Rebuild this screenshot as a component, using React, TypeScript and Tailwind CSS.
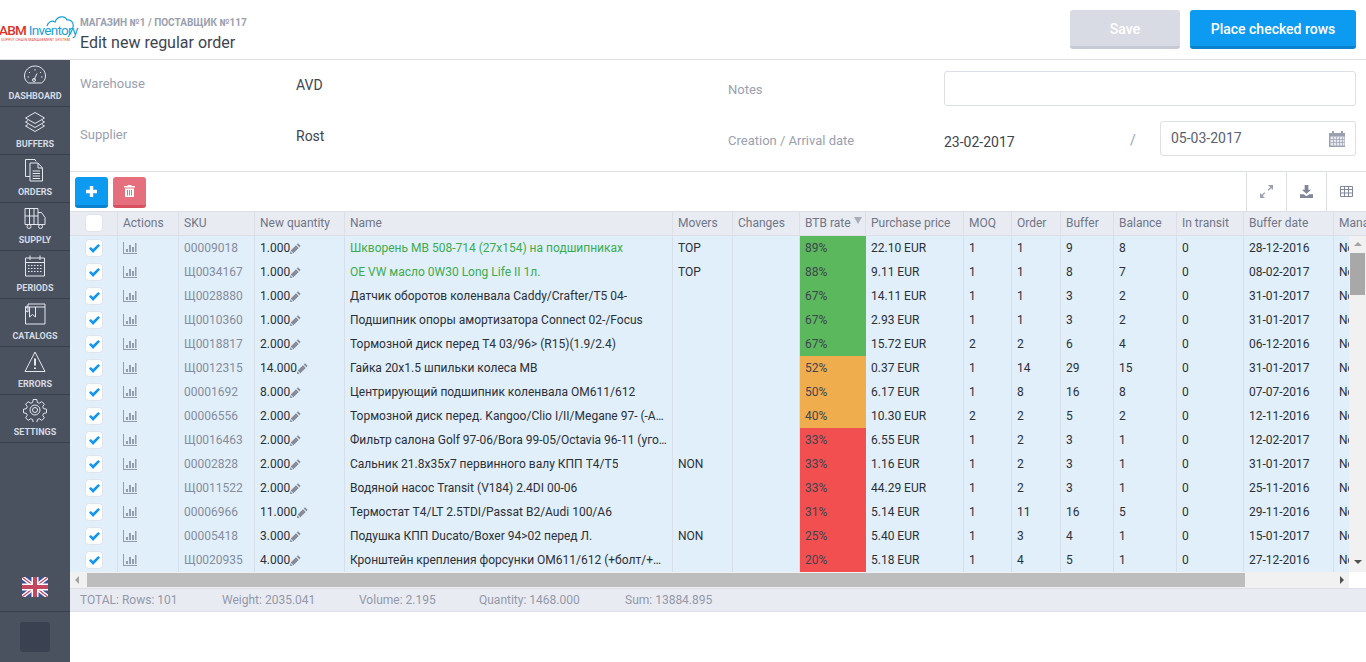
type Row = {
    sku: string;
    qty: string;
    name: string;
    movers?: string;
    btb: number;
    price: string;
    moq: number;
    order: number;
    buffer: number;
    balance: number;
    date: string;
    top?: boolean;
};

const rows: Row[] = [
    { sku: "00009018", qty: "1.000", name: "Шкворень MB 508-714 (27x154) на подшипниках", movers: "TOP", btb: 89, price: "22.10 EUR", moq: 1, order: 1, buffer: 9, balance: 8, date: "28-12-2016", top: true },
    { sku: "Щ0034167", qty: "1.000", name: "OE VW масло 0W30 Long Life II 1л.", movers: "TOP", btb: 88, price: "9.11 EUR", moq: 1, order: 1, buffer: 8, balance: 7, date: "08-02-2017", top: true },
    { sku: "Щ0028880", qty: "1.000", name: "Датчик оборотов коленвала Caddy/Crafter/T5 04-", btb: 67, price: "14.11 EUR", moq: 1, order: 1, buffer: 3, balance: 2, date: "31-01-2017" },
    { sku: "Щ0010360", qty: "1.000", name: "Подшипник опоры амортизатора Connect 02-/Focus", btb: 67, price: "2.93 EUR", moq: 1, order: 1, buffer: 3, balance: 2, date: "31-01-2017" },
    { sku: "Щ0018817", qty: "2.000", name: "Тормозной диск перед T4 03/96> (R15)(1.9/2.4)", btb: 67, price: "15.72 EUR", moq: 2, order: 2, buffer: 6, balance: 4, date: "06-12-2016" },
    { sku: "Щ0012315", qty: "14.000", name: "Гайка 20x1.5 шпильки колеса MB", btb: 52, price: "0.37 EUR", moq: 1, order: 14, buffer: 29, balance: 15, date: "31-01-2017" },
    { sku: "00001692", qty: "8.000", name: "Центрирующий подшипник коленвала OM611/612", btb: 50, price: "6.17 EUR", moq: 1, order: 8, buffer: 16, balance: 8, date: "07-07-2016" },
    { sku: "00006556", qty: "2.000", name: "Тормозной диск перед. Kangoo/Clio I/II/Megane 97- (-ABS) 238x12", btb: 40, price: "10.30 EUR", moq: 2, order: 2, buffer: 5, balance: 2, date: "12-11-2016" },
    { sku: "Щ0016463", qty: "2.000", name: "Фильтр салона Golf 97-06/Bora 99-05/Octavia 96-11 (угольный)", btb: 33, price: "6.55 EUR", moq: 1, order: 2, buffer: 3, balance: 1, date: "12-02-2017" },
    { sku: "00002828", qty: "2.000", name: "Сальник 21.8x35x7 первинного валу КПП T4/T5", movers: "NON", btb: 33, price: "1.16 EUR", moq: 1, order: 2, buffer: 3, balance: 1, date: "31-01-2017" },
    { sku: "Щ0011522", qty: "2.000", name: "Водяной насос Transit (V184) 2.4DI 00-06", btb: 33, price: "44.29 EUR", moq: 1, order: 2, buffer: 3, balance: 1, date: "25-11-2016" },
    { sku: "00006966", qty: "11.000", name: "Термостат T4/LT 2.5TDI/Passat B2/Audi 100/A6", btb: 31, price: "5.14 EUR", moq: 1, order: 11, buffer: 16, balance: 5, date: "29-11-2016" },
    { sku: "00005418", qty: "3.000", name: "Подушка КПП Ducato/Boxer 94>02 перед Л.", movers: "NON", btb: 25, price: "5.40 EUR", moq: 1, order: 3, buffer: 4, balance: 1, date: "15-01-2017" },
    { sku: "Щ0020935", qty: "4.000", name: "Кронштейн крепления форсунки OM611/612 (+болт/+шайба)", btb: 20, price: "5.18 EUR", moq: 1, order: 4, buffer: 5, balance: 1, date: "27-12-2016" },
];

const headers: { label: string; w: string }[] = [
    { label: "", w: "w-[48px]" },
    { label: "Actions", w: "w-[61px]" },
    { label: "SKU", w: "w-[76px]" },
    { label: "New quantity", w: "w-[90px]" },
    { label: "Name", w: "w-[328px]" },
    { label: "Movers", w: "w-[60px]" },
    { label: "Changes", w: "w-[67px]" },
    { label: "BTB rate", w: "w-[66px]" },
    { label: "Purchase price", w: "w-[98px]" },
    { label: "MOQ", w: "w-[48px]" },
    { label: "Order", w: "w-[49px]" },
    { label: "Buffer", w: "w-[53px]" },
    { label: "Balance", w: "w-[63px]" },
    { label: "In transit", w: "w-[67px]" },
    { label: "Buffer date", w: "w-[90px]" },
    { label: "Manager", w: "w-[60px]" },
];

function btbColor(v: number) {
    if (v >= 60) return "bg-[#5cb85c]";
    if (v >= 40) return "bg-[#f0ad4e]";
    return "bg-[#f25050]";
}

function NavIcon({ name }: { name: string }) {
    const common = {
        width: 24,
        height: 24,
        viewBox: "0 0 24 24",
        fill: "none",
        stroke: "#e4e7ec",
        strokeWidth: 1,
    };
    if (name === "DASHBOARD")
        return (
            <svg {...common}>
                <path d="M5.500 21C3 19.500 1.500 17 1.500 14 1.500 8.500 6 4 12 4s10.500 4.500 10.500 10c0 3-1.500 5.500-4 7z" />
                <path d="M6 10l1 1M12 7v1.500M18 10l-1 1M11 18l3-6.500M4.500 15H6M18 15h1.500" />
                <circle cx="11" cy="18" r="1.500" />
            </svg>
        );
    if (name === "BUFFERS")
        return (
            <svg {...common}>
                <path d="M12 2.500l9.500 5.500-9.500 5.500L2.500 8z" />
                <path d="M5 10.500L2.500 12l9.500 5.500 9.500-5.500-2.500-1.500" />
                <path d="M5 14.500L2.500 16l9.500 5.500 9.500-5.500-2.500-1.500" />
            </svg>
        );
    if (name === "ORDERS")
        return (
            <svg {...common}>
                <path d="M7 18.500H2.500V1.500H12l1 2" />
                <path d="M7 5h8l4.500 5v13H7z" />
                <path d="M15 5v5h4.500M9.500 13h7.500M9.500 15.500h7.500M9.500 18h7.500M9.500 20.500h7.500" />
            </svg>
        );
    if (name === "SUPPLY")
        return (
            <svg {...common}>
                <path d="M2 2.500h13v16H2zM6.500 2.500v16M11 2.500v16M2 10h13" />
                <path d="M15 6.500h3.500l3.500 5v7h-7" />
                <circle cx="6" cy="20.500" r="2" />
                <circle cx="17.500" cy="20.500" r="2" />
                <path d="M2 18.500h2M8 18.500h7.500" />
            </svg>
        );
    if (name === "PERIODS")
        return (
            <svg {...common}>
                <path d="M2.500 4h19v18h-19zM2.500 8.500h19M7 1.500V6M17 1.500V6" />
                <path d="M5 11.500h14M5 14.500h14M5 17.500h14" strokeDasharray="1.500 1.500" />
            </svg>
        );
    if (name === "CATALOGS")
        return (
            <svg {...common}>
                <path d="M5 2h17v3H5a2.500 2.500 0 0 0 0 5zM2.500 4.500V22H22V5" />
                <path d="M6.500 5v10l3-2.500 3 2.500V5" />
                <path d="M5 5a2 2 0 0 0-2.500-.5" />
            </svg>
        );
    if (name === "ERRORS")
        return (
            <svg {...common}>
                <path d="M12 2L2 21.500h20z" />
                <path d="M12 8.500v7M12 17.500v1.500" strokeWidth={2} />
            </svg>
        );
    return (
        <svg {...common}>
            <path d="M10.200 1.500h3.600l.6 3 1.900.8 2.500-1.700 2.600 2.600-1.700 2.500.8 1.900 3 .6v3.600l-3 .6-.8 1.900 1.700 2.500-2.600 2.600-2.500-1.700-1.900.8-.6 3h-3.600l-.6-3-1.900-.8-2.500 1.700-2.600-2.600 1.700-2.500-.8-1.900-3-.6v-3.600l3-.6.8-1.900-1.700-2.500 2.600-2.600 2.500 1.700 1.900-.8z" />
            <circle cx="12" cy="12" r="5" />
            <circle cx="12" cy="12" r="2.500" />
        </svg>
    );
}

function BarsIcon() {
    return (
        <svg width="14" height="12" viewBox="0 0 14 12" fill="#959cad">
            <path d="M0 0h1v11h13v1H0z" />
            <path d="M3 7h2v3H3zM6 3h2v7H6zM9 5h2v5H9zM12 1h1.500v9H12z" />
        </svg>
    );
}

function PencilIcon() {
    return (
        <svg width="11" height="11" viewBox="0 0 11 11" fill="#858b99" className="shrink-0">
            <path d="M8 .3l2.700 2.700-1.300 1.300-2.700-2.700zM6 2.300L8.700 5 3.400 10.300.7 7.600zM.3 8.300l2.400 2.400-2.700.3z" />
        </svg>
    );
}

function CheckBox({ checked }: { checked?: boolean }) {
    return (
        <div className="w-[18px] h-[18px] rounded-[4px] bg-white border border-[#dfe3ea] flex items-center justify-center">
            {checked && (
                <svg width="11" height="9" viewBox="0 0 11 9" fill="#1496ec">
                    <path d="M0 4.500L1.800 3l2.200 2L9.200 0 11 1.700 4 9z" />
                </svg>
            )}
        </div>
    );
}

export default function App() {
    return (
        <div className="w-[1366px] h-[662px] overflow-hidden bg-white flex flex-col font-['Roboto',sans-serif] text-[12px] text-[#2b2f38]">
            {/* Header */}
            <header className="h-[60px] shrink-0 flex items-center border-b border-[#dcdfe6] pr-[10px]">
                <div className="w-[80px] h-full relative overflow-hidden shrink-0">
                    <svg className="absolute left-[46px] top-[15px]" width="28" height="24" viewBox="0 0 28 24" fill="none" stroke="#1b9fd8" strokeWidth="1.200">
                        <path d="M1 11C2 7 6 5 9 7 11 1 19 0 21 5c4-1 7 3 6 7-.5 3-2 6-5 10" />
                    </svg>
                    <span className="absolute left-[-1px] top-[21px] text-[13.500px] leading-[18px] tracking-[-0.7px] whitespace-nowrap">
                        <span className="text-[#d9342b] font-medium">ABM </span>
                        <span className="text-[#1b9fd8]">Inventory</span>
                    </span>
                    <span className="absolute left-[1px] top-[38px] text-[3.500px] leading-[4px] tracking-[0.2px] text-[#d9342b] whitespace-nowrap">
                        SUPPLY CHAIN MANAGEMENT SYSTEM
                    </span>
                </div>
                <div className="flex-1 pt-[11px]">
                    <div className="text-[10px] leading-[14px] font-bold text-[#9aa0af]">МАГАЗИН №1 / ПОСТАВЩИК №117</div>
                    <div className="text-[16px] leading-[22px] mt-[2px] text-[#3d4452]">Edit new regular order</div>
                </div>
                <button className="w-[110px] h-[39px] pt-[2px] rounded-[3px] bg-[#d8dbe4] border-b-[3px] border-[#c6cad5] text-white text-[14px] font-medium">Save</button>
                <button className="w-[166px] h-[39px] pt-[2px] ml-[10px] rounded-[3px] bg-[#0d9bf2] border-b-[3px] border-[#0a82ce] text-white text-[14px] font-medium">Place checked rows</button>
            </header>

            <div className="flex-1 flex min-h-0">
                {/* Sidebar */}
                <aside className="w-[70px] shrink-0 bg-[#4a5260] flex flex-col">
                    {["DASHBOARD", "BUFFERS", "ORDERS", "SUPPLY", "PERIODS", "CATALOGS", "ERRORS", "SETTINGS"].map((n, i) => (
                        <div key={n} className={`${i === 0 ? "h-[47px]" : "h-[48px]"} border-b border-[#39404d] flex flex-col items-center justify-end pb-[3px]`}>
                            <NavIcon name={n} />
                            <span className="text-[9px] leading-[14px] font-bold text-[#d6dae2] mt-[3px]">{n}</span>
                        </div>
                    ))}
                    <div className="flex-1 border-b border-[#39404d] flex items-end justify-center pb-[14px]">
                        <svg width="26" height="20" viewBox="0 0 26 20">
                            <rect width="26" height="20" fill="#3f4f94" />
                            <path d="M0 0l26 20M26 0L0 20" stroke="#fff" strokeWidth="4" />
                            <path d="M0 0l26 20M26 0L0 20" stroke="#c2475f" strokeWidth="1.300" />
                            <path d="M13 0v20M0 10h26" stroke="#fff" strokeWidth="7" />
                            <path d="M13 0v20M0 10h26" stroke="#c2475f" strokeWidth="4" />
                        </svg>
                    </div>
                    <div className="h-[50px] shrink-0 pl-[20px] pt-[10px]">
                        <div className="w-[30px] h-[30px] rounded-[3px] bg-[#3a4150]" />
                    </div>
                </aside>

                <main className="flex-1 min-w-0 flex flex-col">
                    {/* Form */}
                    <section className="h-[112px] shrink-0 border-b border-[#dcdfe6] flex text-[#9aa0af]">
                        <div className="w-[658px] pl-[10px] shrink-0">
                            <div className="flex h-[52px] pt-[16px]">
                                <span className="w-[216px] text-[13px] leading-[16px]">Warehouse</span>
                                <span className="text-[14px] leading-[18px] text-[#3d4452]">AVD</span>
                            </div>
                            <div className="flex pt-[15px]">
                                <span className="w-[216px] text-[13px] leading-[16px]">Supplier</span>
                                <span className="text-[14px] leading-[18px] text-[#3d4452]">Rost</span>
                            </div>
                        </div>
                        <div className="flex-1">
                            <div className="flex items-center h-[35px] mt-[11px]">
                                <span className="w-[216px] text-[13px] pt-[2px]">Notes</span>
                                <div className="w-[412px] h-[35px] border border-[#dcdfe6] rounded-[3px]" />
                            </div>
                            <div className="flex items-center h-[35px] mt-[15px]">
                                <span className="w-[216px] text-[13px] pt-[4px]">Creation / Arrival date</span>
                                <span className="w-[186px] text-[14px] text-[#3d4452] pt-[8px]">23-02-2017</span>
                                <span className="w-[30px] text-[14px] pt-[4px]">/</span>
                                <div className="w-[196px] h-[35px] border border-[#dcdfe6] rounded-[3px] flex items-center justify-between pl-[10px] pr-[9px]">
                                    <span className="text-[14px] text-[#5a6170] pb-[1px]">05-03-2017</span>
                                    <svg width="17" height="17" viewBox="0 0 17 17" fill="#9aa0af">
                                        <path d="M1 3h2V1h2v2h7V1h2v2h2v14H0V3z" />
                                        <path d="M1.500 6.500h14v9h-14z" fill="#e6e9ef" />
                                        <path d="M4.500 6.500v9M7.500 6.500v9M10.500 6.500v9M13.500 6.500v9M1.500 9.500h14M1.500 12.500h14" stroke="#9aa0af" strokeWidth=".7" />
                                    </svg>
                                </div>
                            </div>
                        </div>
                    </section>

                    {/* Toolbar */}
                    <section className="h-[40px] shrink-0 border-b border-[#dcdfe6] flex items-start pl-[5px] relative">
                        <button className="w-[33px] h-[31px] mt-[5px] rounded-[3px] bg-[#0d9bf2] border-b-[3px] border-[#0a82ce] flex items-center justify-center">
                            <svg width="11" height="11" viewBox="0 0 11 11" fill="#fff">
                                <path d="M3.800 0h3.400v3.800H11v3.400H7.200V11H3.800V7.200H0V3.800h3.800z" />
                            </svg>
                        </button>
                        <button className="w-[33px] h-[31px] mt-[5px] ml-[5px] rounded-[3px] bg-[#e56f7d] border-b-[3px] border-[#d9505f] flex items-center justify-center">
                            <svg width="11" height="12" viewBox="0 0 11 12" fill="#fff">
                                <path d="M3.500 0h4v1H11v1.500H0V1h3.500zM1 3.500h9V12H1zM3 5v5.500h1V5zM5 5v5.500h1V5zM7 5v5.500h1V5z" fillRule="evenodd" />
                            </svg>
                        </button>
                        <div className="ml-auto flex h-full">
                            <div className="w-[40px] h-full border-l border-[#dcdfe6] flex items-center justify-center">
                                <svg width="13" height="13" viewBox="0 0 13 13" fill="#9aa0af" stroke="none">
                                    <path d="M8 0h5v5l-1.800-1.800-2.500 2.500-.9-.9 2.500-2.500zM5 13H0V8l1.800 1.800 2.500-2.500.9.900-2.500 2.500z" />
                                </svg>
                            </div>
                            <div className="w-[40px] h-full border-l border-[#dcdfe6] flex items-center justify-center">
                                <svg width="13" height="13" viewBox="0 0 14 14" fill="#7f8799">
                                    <path d="M5 0h4v5h3L7 9.500 2 5h3zM0 10h4l3 2 3-2h4v4H0z" />
                                </svg>
                            </div>
                            <div className="w-[40px] h-full border-l border-[#dcdfe6] flex items-center justify-center">
                                <svg width="13" height="11" viewBox="0 0 13 11" fill="none" stroke="#7f8799">
                                    <path d="M.5.500h12v10H.5zM.5 3.500h12M.5 7h12M4.500.500v10M8.500.500v10" />
                                </svg>
                            </div>
                        </div>
                    </section>

                    {/* Table */}
                    <section className="h-[376px] shrink-0 relative overflow-hidden">
                        <div className="w-[1400px]">
                            <div className="h-[24px] flex bg-[#e9ebf3] border-b border-[#dcdfe6] text-[#6f7686]">
                                {headers.map((h, i) => (
                                    <div key={i} className={`${h.w} shrink-0 h-full border-r border-[#dcdfe6] flex items-center pb-[1px] ${i === 0 ? "pl-[15px]" : "pl-[5px]"} relative whitespace-nowrap`}>
                                        {i === 0 ? <CheckBox /> : h.label}
                                        {h.label === "BTB rate" && (
                                            <span className="absolute right-[3px] top-[5px] w-0 h-0 border-x-[4px] border-x-transparent border-t-[7px] border-t-[#a9adb8]" />
                                        )}
                                    </div>
                                ))}
                            </div>
                            {rows.map((r) => (
                                <div key={r.sku} className="h-[24px] flex bg-[#e1effb]">
                                    <div className="w-[48px] shrink-0 border-r border-[#d9dfe9] flex items-center pl-[15px]">
                                        <CheckBox checked />
                                    </div>
                                    <div className="w-[61px] shrink-0 border-r border-[#d9dfe9] flex items-center pl-[5px]">
                                        <BarsIcon />
                                    </div>
                                    <div className="w-[76px] shrink-0 border-r border-[#d9dfe9] flex items-center pl-[5px] text-[#858c9b]">{r.sku}</div>
                                    <div className="w-[90px] shrink-0 border-r border-[#d9dfe9] flex items-center pl-[5px]">
                                        {r.qty}
                                        <PencilIcon />
                                    </div>
                                    <div className={`w-[328px] shrink-0 border-r border-[#d9dfe9] flex items-center px-[5px] ${r.top ? "text-[#3cab4e]" : ""}`}>
                                        <span className="truncate">{r.name}</span>
                                    </div>
                                    <div className="w-[60px] shrink-0 border-r border-[#d9dfe9] flex items-center pl-[5px]">{r.movers}</div>
                                    <div className="w-[67px] shrink-0 border-r border-[#d9dfe9]" />
                                    <div className={`w-[66px] shrink-0 flex items-center pl-[5px] text-[#3d4452] ${btbColor(r.btb)}`}>{r.btb}%</div>
                                    <div className="w-[98px] shrink-0 border-r border-[#d9dfe9] flex items-center pl-[5px]">{r.price}</div>
                                    <div className="w-[48px] shrink-0 border-r border-[#d9dfe9] flex items-center pl-[5px]">{r.moq}</div>
                                    <div className="w-[49px] shrink-0 border-r border-[#d9dfe9] flex items-center pl-[5px]">{r.order}</div>
                                    <div className="w-[53px] shrink-0 border-r border-[#d9dfe9] flex items-center pl-[5px]">{r.buffer}</div>
                                    <div className="w-[63px] shrink-0 border-r border-[#d9dfe9] flex items-center pl-[5px]">{r.balance}</div>
                                    <div className="w-[67px] shrink-0 border-r border-[#d9dfe9] flex items-center pl-[5px]">0</div>
                                    <div className="w-[90px] shrink-0 border-r border-[#d9dfe9] flex items-center pl-[5px]">{r.date}</div>
                                    <div className="w-[60px] shrink-0 flex items-center pl-[5px]">No</div>
                                </div>
                            ))}
                        </div>

                        {/* Vertical scrollbar */}
                        <div className="absolute right-0 top-[24px] bottom-[16px] w-[17px] bg-[#f1f1f1]">
                            <span className="absolute left-[5px] top-[6px] w-0 h-0 border-x-[4px] border-x-transparent border-b-[4px] border-b-[#a3a3a3]" />
                            <div className="absolute left-[1px] right-[1px] top-[17px] h-[42px] bg-[#a8a8a8]" />
                            <span className="absolute left-[5px] bottom-[8px] w-0 h-0 border-x-[4px] border-x-transparent border-t-[4px] border-t-[#505050]" />
                        </div>

                        {/* Horizontal scrollbar */}
                        <div className="absolute left-0 right-[17px] bottom-0 h-[16px] bg-[#f1f1f1] flex items-center">
                            <span className="ml-[5px] w-0 h-0 border-y-[4px] border-y-transparent border-r-[4px] border-r-[#a3a3a3]" />
                            <div className="ml-[8px] w-[1158px] h-[14px] bg-[#bdbdbd]" />
                            <span className="ml-auto mr-[5px] w-0 h-0 border-y-[4px] border-y-transparent border-l-[4px] border-l-[#505050]" />
                        </div>
                    </section>

                    {/* Totals */}
                    <footer className="h-[24px] shrink-0 bg-[#e9ebf3] border-y border-[#dcdfe6] flex items-center pl-[10px] text-[#9298a8]">
                        <span className="w-[142px]">TOTAL: Rows: 101</span>
                        <span className="w-[137px]">Weight: 2035.041</span>
                        <span className="w-[120px]">Volume: 2.195</span>
                        <span className="w-[146px]">Quantity: 1468.000</span>
                        <span>Sum: 13884.895</span>
                    </footer>
                </main>
            </div>
        </div>
    );
}
